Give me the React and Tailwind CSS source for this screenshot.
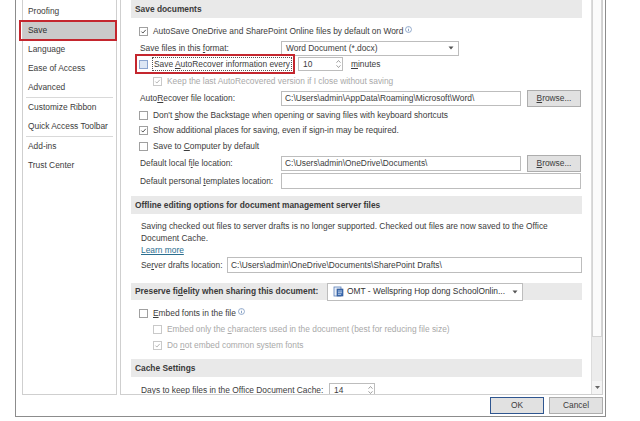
const navItems = [
  "Proofing",
  "Save",
  "Language",
  "Ease of Access",
  "Advanced",
  "-",
  "Customize Ribbon",
  "Quick Access Toolbar",
  "-",
  "Add-ins",
  "Trust Center",
];

function Check({ disabled }) {
  return (
    <svg width="9" height="9" viewBox="0 0 9 9" className="block">
      <path
        d="M1.8 4.6 L3.7 6.5 L7.4 2.4"
        fill="none"
        stroke={disabled ? "#a8a8a8" : "#333"}
        strokeWidth="1.1"
      />
    </svg>
  );
}

function Box({ checked, disabled, focus }) {
  return (
    <span
      className={
        "w-[9px] h-[9px] shrink-0 border flex items-center justify-center " +
        (focus
          ? "border-[#8aa4cf] bg-[#dce6f4]"
          : disabled
          ? "border-[#c9c9c9] bg-white"
          : "border-[#a0a0a0] bg-white")
      }
    >
      {checked && <Check disabled={disabled} />}
    </span>
  );
}

function Info() {
  return (
    <svg width="7" height="7" viewBox="0 0 8 8" className="inline-block align-top ml-[2px] mt-[-1px]">
      <circle cx="4" cy="4" r="3.4" fill="none" stroke="#6a8bb8" strokeWidth="0.8" />
      <path d="M4 3.4 V6" stroke="#6a8bb8" strokeWidth="0.9" />
      <circle cx="4" cy="2.2" r="0.5" fill="#6a8bb8" />
    </svg>
  );
}

function Header({ children }) {
  return (
    <div className="h-[18px] shrink-0 bg-[#e9e9e9] px-[4px] flex items-center font-bold text-[#3a3a3a]">
      <span className="whitespace-nowrap">{children}</span>
    </div>
  );
}

function Gap({ h }) {
  return <div className="shrink-0" style={{ height: h }} />;
}

function CheckRow({ h, indent, checked, disabled, children }) {
  return (
    <div
      className={
        "flex items-center gap-[5px] shrink-0 " +
        (indent ? "pl-[22px] " : "pl-[8px] ") +
        (disabled ? "text-[#a9a9a9]" : "")
      }
      style={{ height: h }}
    >
      <Box checked={checked} disabled={disabled} />
      <span className="whitespace-nowrap">{children}</span>
    </div>
  );
}

function Field({ value, className = "" }) {
  return (
    <div
      className={
        "h-[15px] border border-[#bdbdbd] bg-white px-[3px] flex items-center whitespace-nowrap overflow-hidden " +
        className
      }
    >
      {value}
    </div>
  );
}

function Browse() {
  return (
    <div className="w-[54px] h-[17px] border border-[#adadad] bg-[#e1e1e1] flex items-center justify-center">
      <span>
        <u>B</u>rowse...
      </span>
    </div>
  );
}

function Spinner({ value, className = "" }) {
  return (
    <div
      className={
        "h-[14px] border border-[#bdbdbd] bg-white flex items-center justify-between pl-[4px] shrink-0 " +
        className
      }
    >
      <span>{value}</span>
      <div className="flex flex-col items-center justify-center w-[8px] h-full">
        <svg width="5" height="3" viewBox="0 0 5 3">
          <path d="M0.5 2.7 L2.5 0.5 L4.5 2.7" fill="none" stroke="#888" strokeWidth="0.8" />
        </svg>
        <svg width="5" height="3" viewBox="0 0 5 3" className="mt-[2px]">
          <path d="M0.5 0.3 L2.5 2.5 L4.5 0.3" fill="none" stroke="#888" strokeWidth="0.8" />
        </svg>
      </div>
    </div>
  );
}

function Caret() {
  return (
    <svg width="6" height="4" viewBox="0 0 6 4" className="shrink-0">
      <path d="M0.5 0.5 H5.5 L3 3.5 Z" fill="#555" />
    </svg>
  );
}

function DocIcon() {
  return (
    <svg width="11" height="11" viewBox="0 0 11 11" className="shrink-0">
      <rect x="1" y="1" width="7" height="9" fill="#e8eef8" stroke="#5b7fb8" strokeWidth="0.8" />
      <rect x="4" y="3" width="6" height="7" fill="#3f6fb5" stroke="#2a4f8a" strokeWidth="0.6" />
      <path d="M5 5 H9 M5 6.7 H9 M5 8.4 H8" stroke="#fff" strokeWidth="0.6" />
    </svg>
  );
}

export default function App() {
  return (
    <div className="w-[640px] h-[421px] bg-white overflow-hidden font-['Liberation_Sans',Arial,sans-serif] text-[8.4px] text-[#3c3c3c] leading-none">
      <div className="ml-[15px] w-[591px] h-[417px] border-x border-b border-[#8c8c8c] bg-white flex flex-col">
        <div className="flex h-[395px] shrink-0 pl-[6px] pr-[2px] gap-[3px]">
          {/* left nav */}
          <div className="w-[95px] border-x border-b border-[#cfcfcf] pt-[2px] flex flex-col">
            {navItems.map((item, i) =>
              item === "-" ? (
                <div key={i} className="h-px shrink-0 mx-[3px] bg-[#d9d9d9]" />
              ) : item === "Save" ? (
                <div key={i} className="relative h-[19px] shrink-0 flex items-center pl-[5px] bg-[#cacaca] text-[#2e2e2e]">
                  Save
                  <div className="absolute left-[-4px] right-[-1px] top-[-1px] bottom-[-1px] border-2 border-[#c4262e]" />
                </div>
              ) : (
                <div key={i} className="h-[19px] shrink-0 flex items-center pl-[5px] whitespace-nowrap">
                  {item}
                </div>
              )
            )}
          </div>

          {/* content */}
          <div className="flex-1 border-x border-b border-[#cfcfcf] flex overflow-hidden">
            <div className="flex-1 pl-[10px] pr-[9px] flex flex-col overflow-hidden">
              <Header>Save documents</Header>
              <Gap h={4} />
              <CheckRow h={18} checked>
                AutoSave OneDrive and SharePoint Online files by default on Word
                <Info />
              </CheckRow>
              <div className="h-[16px] flex items-center pl-[9px] shrink-0">
                <span className="w-[141px] whitespace-nowrap">
                  Save files in this <u>f</u>ormat:
                </span>
                <div className="w-[178px] h-[15px] border border-[#bdbdbd] bg-white flex items-center justify-between pl-[4px] pr-[4px]">
                  <span>Word Document (*.docx)</span>
                  <Caret />
                </div>
              </div>
              <div className="h-[16px] flex items-center pl-[4px] shrink-0">
                <div className="w-[160px] h-[20px] border-2 border-[#c4262e] flex items-center pl-[2px] gap-[4px] shrink-0">
                  <Box focus />
                  <span className="border border-dotted border-[#555] px-[1px] py-[2px] whitespace-nowrap">
                    Save <u>A</u>utoRecover information every
                  </span>
                </div>
                <Spinner value="10" className="w-[45px] ml-[3px]" />
                <span className="ml-[8px]">
                  <u>m</u>inutes
                </span>
              </div>
              <CheckRow h={18} indent checked disabled>
                Keep the last AutoRecovered version if I close without saving
              </CheckRow>
              <div className="h-[17px] flex items-center pl-[9px] shrink-0">
                <span className="w-[141px] whitespace-nowrap">
                  Auto<u>R</u>ecover file location:
                </span>
                <Field value="C:\Users\admin\AppData\Roaming\Microsoft\Word\" className="w-[240px]" />
                <div className="ml-[6px]">
                  <Browse />
                </div>
              </div>
              <CheckRow h={16}>
                Don't <u>s</u>how the Backstage when opening or saving files with keyboard shortcuts
              </CheckRow>
              <CheckRow h={15} checked>
                Show additional places for saving, even if sign-in may be required.
              </CheckRow>
              <CheckRow h={16}>
                Save to <u>C</u>omputer by default
              </CheckRow>
              <div className="h-[18px] flex items-center pl-[9px] shrink-0">
                <span className="w-[141px] whitespace-nowrap">
                  Default local f<u>i</u>le location:
                </span>
                <Field value="C:\Users\admin\OneDrive\Documents\" className="w-[240px]" />
                <div className="ml-[6px]">
                  <Browse />
                </div>
              </div>
              <div className="h-[18px] flex items-center pl-[9px] shrink-0">
                <span className="w-[141px] whitespace-nowrap">
                  Default personal <u>t</u>emplates location:
                </span>
                <Field value="" className="w-[300px] h-[16px]" />
              </div>
              <Gap h={6} />
              <Header>Offline editing options for document management server files</Header>
              <div className="pl-[10px] pt-[6px] leading-[12px] shrink-0">
                <div className="whitespace-nowrap">
                  Saving checked out files to server drafts is no longer supported. Checked out files are now saved to the Office
                </div>
                <div>Document Cache.</div>
                <div className="text-[#2b6e8f] underline">Learn more</div>
              </div>
              <div className="h-[18px] flex items-center pl-[10px] shrink-0">
                <span className="w-[86px] whitespace-nowrap">
                  Se<u>r</u>ver drafts location:
                </span>
                <Field value="C:\Users\admin\OneDrive\Documents\SharePoint Drafts\" className="flex-1 h-[16px]" />
              </div>
              <Gap h={9} />
              <div className="h-[17px] bg-[#e9e9e9] pl-[4px] flex items-center shrink-0">
                <span className="w-[192px] font-bold text-[#3a3a3a] whitespace-nowrap">
                  Preserve fi<u>d</u>elity when sharing this document:
                </span>
                <div className="w-[196px] h-[18px] border border-[#bdbdbd] bg-white flex items-center pl-[5px] pr-[4px] gap-[3px]">
                  <DocIcon />
                  <span className="flex-1 whitespace-nowrap text-[#333]">
                    OMT - Wellspring Hop dong SchoolOnlin...
                  </span>
                  <Caret />
                </div>
              </div>
              <Gap h={5} />
              <CheckRow h={16}>
                <u>E</u>mbed fonts in the file
                <Info />
              </CheckRow>
              <CheckRow h={16} indent disabled>
                Embed only the <u>c</u>haracters used in the document (best for reducing file size)
              </CheckRow>
              <CheckRow h={16} indent checked disabled>
                Do <u>n</u>ot embed common system fonts
              </CheckRow>
              <Gap h={6} />
              <Header>Cache Settings</Header>
              <Gap h={5} />
              <div className="h-[16px] flex items-center pl-[10px] shrink-0">
                <span className="w-[188px] whitespace-nowrap">
                  Days to <u>k</u>eep files in the Office Document Cache:
                </span>
                <Spinner value="14" className="w-[46px]" />
              </div>
            </div>

            {/* scrollbar */}
            <div className="w-[11px] flex flex-col bg-[#ececec] border-l border-[#dcdcdc]">
              <div className="h-[337px] bg-[#fbfbfb] border-x border-b border-[#d4d4d4]" />
              <div className="flex-1" />
              <div className="h-[13px] flex items-center justify-center bg-[#f4f4f4]">
                <svg width="5" height="3" viewBox="0 0 5 3">
                  <path d="M0 0 H5 L2.5 3 Z" fill="#666" />
                </svg>
              </div>
            </div>
          </div>
        </div>

        {/* buttons */}
        <div className="flex justify-end gap-[5px] pr-[2px] pt-[2px]">
          <div className="w-[54px] h-[17px] border border-[#2f5690] bg-[#e1e1e1] flex items-center justify-center">
            OK
          </div>
          <div className="w-[54px] h-[17px] border border-[#adadad] bg-[#e1e1e1] flex items-center justify-center">
            Cancel
          </div>
        </div>
      </div>
    </div>
  );
}
